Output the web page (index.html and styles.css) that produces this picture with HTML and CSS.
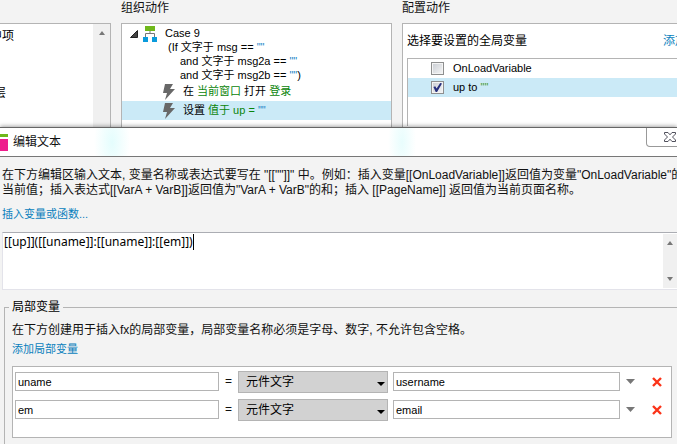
FILE: index.html
```html
<!DOCTYPE html>
<html lang="zh-CN">
<head>
    <meta charset="UTF-8">
    <meta name="viewport" content="width=device-width, initial-scale=1.0">
    <title>编辑文本</title>
    <link rel="stylesheet" href="styles.css">
</head>
<body>

    <!-- Case editor behind the dialog -->
    <div class="workspace">
        <section class="column">
            <h2></h2>
            <div class="panel panel-left">
                <ul class="action-list">
                    <li>中项</li>
                    <li class="nested">层</li>
                </ul>
                <div class="scrollbar">
                    <svg width="6" height="4" viewBox="0 0 6 4"><path d="M0 4L3 0L6 4Z" fill="#777"/></svg>
                </div>
            </div>
        </section>

        <section class="column">
            <h2>组织动作</h2>
            <div class="panel">
                <div class="case">
                    <svg class="expander" width="8" height="8" viewBox="0 0 8 8"><path d="M7.5 0.5V7.5H0.5Z" fill="#444" stroke="#222"/></svg>
                    <svg class="case-icon" width="14" height="16" viewBox="0 0 14 16">
                        <path d="M7 5V8M2.5 11V7.5H11.5V11" fill="none" stroke="#777"/>
                        <rect x="2" y="0" width="10" height="5" fill="#6fb81b"/>
                        <rect x="0" y="11" width="5" height="5" fill="#0a9bdc"/>
                        <rect x="9" y="11" width="5" height="5" fill="#0a9bdc"/>
                    </svg>
                    <div class="case-text">
                        <p>Case 9</p>
                        <p class="cond">(If 文字于 msg == <span class="val">""</span></p>
                        <p class="cond-and">and 文字于 msg2a == <span class="val">""</span></p>
                        <p class="cond-and">and 文字于 msg2b == <span class="val">""</span>)</p>
                    </div>
                </div>
                <div class="action">
                    <svg width="13" height="16" viewBox="0 0 13 16"><path d="M3 0H11L8 5H13L3 16L5 9H1Z" fill="#686868"/></svg>
                    <p>在 <span class="green">当前窗口</span> 打开 <span class="green">登录</span></p>
                </div>
                <div class="action selected">
                    <svg width="13" height="16" viewBox="0 0 13 16"><path d="M3 0H11L8 5H13L3 16L5 9H1Z" fill="#686868"/></svg>
                    <p>设置 <span class="green">值于 up = <span class="val">""</span></span></p>
                </div>
            </div>
        </section>

        <section class="column">
            <h2>配置动作</h2>
            <div class="panel panel-right">
                <div class="panel-head">
                    <span>选择要设置的全局变量</span>
                    <a href="#">添加</a>
                </div>
                <div class="variables">
                    <label class="variable"><input type="checkbox"> <span>OnLoadVariable</span></label>
                    <label class="variable selected"><input type="checkbox" checked> <span>up to <span class="quote">""</span></span></label>
                </div>
            </div>
        </section>
    </div>

    <!-- Edit text dialog -->
    <div class="dialog">
        <div class="titlebar">
            <svg width="8" height="17" viewBox="0 0 8 17">
                <rect width="8" height="3" fill="#6fb81b"/>
                <rect y="5" width="8" height="12" fill="#ee1d8c"/>
            </svg>
            <h1>编辑文本</h1>
            <button class="close" type="button" aria-label="关闭">
                <svg width="12" height="10" viewBox="0 0 12 10"><path d="M0.5 0.5H4L6 2.8L8 0.5H11.5V2L8.5 5L11.5 8V9.5H8L6 7.2L4 9.5H0.5V8L3.5 5L0.5 2Z" fill="#fff" stroke="#50505c"/></svg>
            </button>
        </div>

        <div class="intro">
            <p>在下方编辑区输入文本, 变量名称或表达式要写在 "[[""]]" 中。例如：插入变量[[OnLoadVariable]]返回值为变量"OnLoadVariable"的<br>当前值；插入表达式[[VarA + VarB]]返回值为"VarA + VarB"的和；插入 [[PageName]] 返回值为当前页面名称。</p>
            <a href="#">插入变量或函数...</a>
        </div>

        <div class="editor">
            <textarea aria-label="文本" spellcheck="false">[[up]]([[uname]]:[[uname]]:[[em]])</textarea>
            <span class="caret"></span>
            <div class="scrollbar">
                <svg width="6" height="4" viewBox="0 0 6 4"><path d="M0 4L3 0L6 4Z" fill="#777"/></svg>
                <svg width="6" height="4" viewBox="0 0 6 4"><path d="M0 0L3 4L6 0Z" fill="#777"/></svg>
            </div>
        </div>

        <fieldset class="locals">
            <legend>局部变量</legend>
            <p>在下方创建用于插入fx的局部变量，局部变量名称必须是字母、数字, 不允许包含空格。</p>
            <a href="#">添加局部变量</a>

            <div class="rows">
                <div class="row">
                    <input class="name" type="text" value="uname" aria-label="变量名称">
                    <span class="equals">=</span>
                    <span class="select">
                        <select aria-label="类型"><option>元件文字</option></select>
                        <svg width="8" height="4" viewBox="0 0 8 4"><path d="M0 0H8L4 4Z" fill="#000"/></svg>
                    </span>
                    <input class="target" type="text" value="username" aria-label="元件">
                    <button class="more" type="button" aria-label="选择元件">
                        <svg width="9" height="5" viewBox="0 0 9 5"><path d="M0 0H9L4.5 5Z" fill="#777"/></svg>
                    </button>
                    <button class="remove" type="button" aria-label="删除">
                        <svg width="10" height="10" viewBox="0 0 10 10"><path d="M1 1L9 9M9 1L1 9" stroke="#fb3318" stroke-width="2.4"/></svg>
                    </button>
                </div>
                <div class="row">
                    <input class="name" type="text" value="em" aria-label="变量名称">
                    <span class="equals">=</span>
                    <span class="select">
                        <select aria-label="类型"><option>元件文字</option></select>
                        <svg width="8" height="4" viewBox="0 0 8 4"><path d="M0 0H8L4 4Z" fill="#000"/></svg>
                    </span>
                    <input class="target" type="text" value="email" aria-label="元件">
                    <button class="more" type="button" aria-label="选择元件">
                        <svg width="9" height="5" viewBox="0 0 9 5"><path d="M0 0H9L4.5 5Z" fill="#777"/></svg>
                    </button>
                    <button class="remove" type="button" aria-label="删除">
                        <svg width="10" height="10" viewBox="0 0 10 10"><path d="M1 1L9 9M9 1L1 9" stroke="#fb3318" stroke-width="2.4"/></svg>
                    </button>
                </div>
            </div>
        </fieldset>
    </div>

</body>
</html>
```

FILE: styles.css
```css
* {
    box-sizing: border-box;
}

body {
    margin: 0;
    min-height: 100vh;
    display: flex;
    flex-direction: column;
    overflow: hidden;
    background-color: #f3f3f3;
    color: #111;
    font-family: "Liberation Sans", "Noto Sans CJK SC", sans-serif;
    font-size: 12px;
    line-height: 15px;
    white-space: nowrap;
}

h1, h2, p, ul {
    margin: 0;
    padding: 0;
    font-size: 12px;
    font-weight: normal;
}

svg {
    display: block;
    flex: none;
}

a {
    color: #0a7fbd;
    text-decoration: none;
}

button {
    display: flex;
    align-items: center;
    justify-content: center;
    padding: 0;
    border: none;
    background: none;
    cursor: pointer;
}

/* workspace */
.workspace {
    display: grid;
    grid-template-columns: 111px 271px 1fr;
    gap: 10px;
}

.column {
    display: flex;
    flex-direction: column;
    min-width: 0;
}

.column h2 {
    height: 23px;
    padding-top: 1px;
}

.panel {
    flex: 1;
    padding-top: 2px;
    border: 1px solid #b4b4b4;
    border-bottom: none;
    background-color: #fff;
    font-size: 11px;
    color: #000;
}

.panel p {
    font-size: 11px;
}

.panel-left {
    display: flex;
    justify-content: space-between;
    padding-top: 0;
    border-left: none;
    overflow: hidden;
}

.action-list {
    margin-left: -10px;
    padding-top: 4px;
    list-style: none;
    font-size: 12px;
    line-height: 16px;
}

.action-list .nested {
    padding-left: 4px;
    margin-top: 41px;
}

.scrollbar {
    display: flex;
    flex-direction: column;
    align-items: center;
    justify-content: space-between;
    width: 17px;
    padding: 7px 0;
    background-color: #f0f0f0;
}

.case {
    display: flex;
    line-height: 14px;
}

.expander {
    margin: 4px 5px 0 8px;
}

.case-icon {
    margin-right: 8px;
}

.case-text .cond {
    padding-left: 3px;
}

.case-text .cond-and {
    padding-left: 15px;
}

.val {
    color: #2386c8;
}

.green {
    color: #0a850a;
}

.action {
    display: flex;
    align-items: center;
    gap: 8px;
    height: 19px;
    padding-left: 40px;
}

.selected {
    background-color: #cbeaf7;
}

.action.selected {
    margin-bottom: 7px;
}

.panel-right {
    padding-top: 10px;
    border-right: none;
}

.panel-head {
    display: flex;
    justify-content: space-between;
    padding-left: 4px;
    margin-right: -10px;
    font-size: 12px;
}

.variables {
    margin: 9px 0 0 4px;
    border-top: 1px solid #b4b4b4;
    border-left: 1px solid #b4b4b4;
    height: 68px;
}

.variable {
    display: flex;
    align-items: center;
    gap: 9px;
    height: 19px;
    padding-left: 23px;
}

.variable input {
    appearance: none;
    width: 13px;
    height: 13px;
    margin: 0;
    border: 1px solid #8e8f8f;
    background: linear-gradient(135deg, #c8ccd2, #f6f6f6);
    box-shadow: inset 0 0 0 1px #f4f4f4;
}

.variable input:checked::after {
    content: "";
    display: block;
    width: 9px;
    height: 9px;
    margin: 1px;
    background-color: #27307e;
    clip-path: polygon(5% 45%, 25% 35%, 40% 60%, 80% 0, 100% 5%, 45% 100%, 30% 100%);
}

.quote {
    color: #4a9a30;
}

/* dialog */
.dialog {
    position: relative;
    flex: 1;
    display: flex;
    flex-direction: column;
    border-top: 1px solid #666;
    background-color: #f3f3f3;
    box-shadow: 0 -1px 4px rgba(0, 0, 0, 0.35);
}

.titlebar {
    display: flex;
    align-items: center;
    gap: 5px;
    height: 29px;
    border-bottom: 1px solid #777;
    background:
        radial-gradient(ellipse 18px 40px at 112px 50%, #e4fdfd, transparent),
        radial-gradient(ellipse 14px 40px at 402px 50%, #e8fdfd, transparent),
        #fff;
}

.close {
    align-self: flex-start;
    width: 48px;
    height: 19px;
    margin: 0 -17px 0 auto;
    border: 1px solid #999;
    border-top: none;
    border-radius: 0 0 4px 4px;
}

.intro {
    padding: 11px 2px 10px;
}

.intro a {
    display: block;
    margin-top: 9px;
    font-size: 11px;
}

.editor {
    position: relative;
    display: flex;
    height: 58px;
    margin-left: 2px;
    border: 1px solid #e3e3ea;
    border-top-color: #abadb3;
    border-right: none;
    background-color: #fff;
}

.editor textarea {
    flex: 1;
    padding: 0 1px;
    border: none;
    outline: none;
    resize: none;
    overflow: hidden;
    background: none;
    color: #000;
    font-family: "Noto Sans", sans-serif;
    font-size: 12px;
    line-height: 18px;
}

.editor .scrollbar {
    width: 14px;
    margin: 1px 0;
}

.caret {
    position: absolute;
    top: 1px;
    left: 190px;
    width: 1px;
    height: 16px;
    background-color: #000;
}

.locals {
    flex: 1;
    min-width: 0;
    margin: 10px 0 0 4px;
    padding: 0 5px 6px 7px;
    border: 1px solid #b4b4b4;
    border-right: none;
    border-bottom: none;
}

.locals legend {
    margin-left: -3px;
    padding: 0 3px;
    color: #000;
}

.locals p {
    padding-top: 8px;
}

.locals a {
    display: block;
    margin: 4px 0 9px;
    font-size: 11px;
}

.rows {
    display: flex;
    flex-direction: column;
    gap: 5px;
    padding: 3px 2px 16px;
    border: 1px solid #b4b4b4;
    background-color: #fff;
}

.row {
    display: flex;
    align-items: center;
    height: 23px;
}

.row input {
    min-width: 0;
    height: 19px;
    padding: 0 2px;
    border: 1px solid #b4b4b4;
    background-color: #fff;
    color: #000;
    font-family: inherit;
    font-size: 11px;
}

.name {
    flex: 198;
}

.equals {
    width: 19px;
    text-align: center;
}

.select {
    position: relative;
    flex: 150;
}

.select select {
    appearance: none;
    display: block;
    width: 100%;
    height: 22px;
    padding: 0 7px;
    border: 1px solid #b4b4b4;
    border-radius: 0;
    background-color: #d2d2d2;
    color: #000;
    font-family: inherit;
    font-size: 12px;
}

.select svg {
    position: absolute;
    right: 3px;
    top: 11px;
    pointer-events: none;
}

.target {
    flex: 221;
    margin-left: 5px;
}

.more {
    width: 21px;
    height: 19px;
}

.remove {
    width: 28px;
    height: 19px;
    padding-left: 4px;
}
```
